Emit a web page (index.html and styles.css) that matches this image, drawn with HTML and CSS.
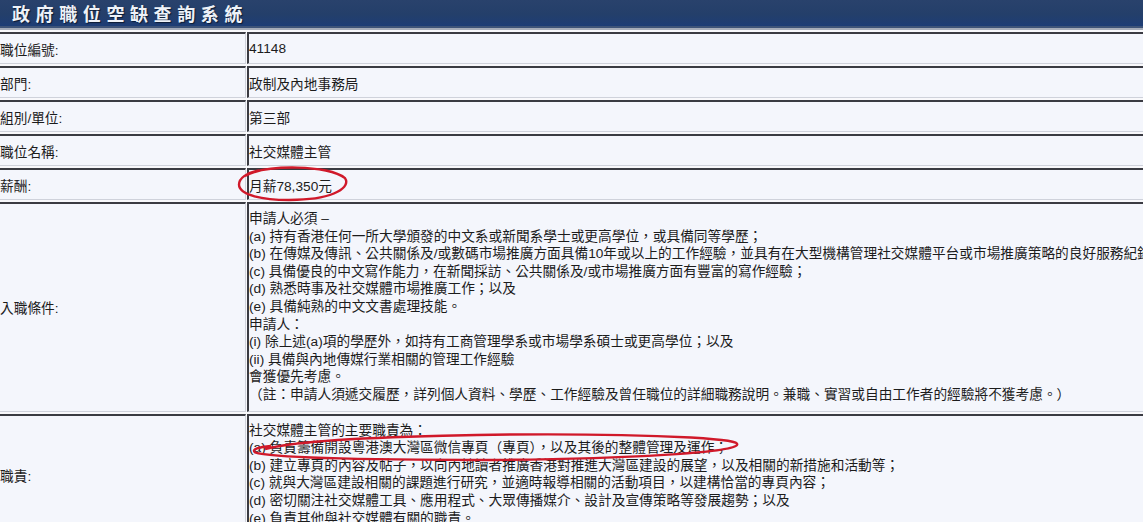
FILE: index.html
```html
<!DOCTYPE html>
<html lang="zh-Hant">
<head>
<meta charset="utf-8">
<title>政府職位空缺查詢系統</title>
<link rel="stylesheet" href="styles.css">
</head>
<body>
<header class="banner">
  <h1 class="banner-title">政府職位空缺查詢系統</h1>
</header>
<main class="detail">
  <div class="cell label">職位編號:</div>
  <div class="cell value">41148</div>

  <div class="cell label">部門:</div>
  <div class="cell value">政制及內地事務局</div>

  <div class="cell label">組別/單位:</div>
  <div class="cell value">第三部</div>

  <div class="cell label">職位名稱:</div>
  <div class="cell value">社交媒體主管</div>

  <div class="cell label">薪酬:</div>
  <div class="cell value"><span class="circled">月薪78,350元<svg class="mark mark-salary" viewBox="0 0 112 34" preserveAspectRatio="none"><path d="M8 10 C 30 -1, 92 0, 108 12 C 114 20, 98 31, 60 32 C 24 33, 2 27, 2 18 C 2 12, 10 7, 22 5"/></svg></span></div>

  <div class="cell label">入職條件:</div>
  <div class="cell value multi">
    <p class="line">申請人必須 –</p>
    <p class="line">(a) 持有香港任何一所大學頒發的中文系或新聞系學士或更高學位，或具備同等學歷；</p>
    <p class="line">(b) 在傳媒及傳訊、公共關係及/或數碼市場推廣方面具備10年或以上的工作經驗，並具有在大型機構管理社交媒體平台或市場推廣策略的良好服務紀錄。</p>
    <p class="line">(c) 具備優良的中文寫作能力，在新聞採訪、公共關係及/或市場推廣方面有豐富的寫作經驗；</p>
    <p class="line">(d) 熟悉時事及社交媒體市場推廣工作；以及</p>
    <p class="line">(e) 具備純熟的中文文書處理技能。</p>
    <p class="line">申請人：</p>
    <p class="line">(i) 除上述(a)項的學歷外，如持有工商管理學系或市場學系碩士或更高學位；以及</p>
    <p class="line">(ii) 具備與內地傳媒行業相關的管理工作經驗</p>
    <p class="line">會獲優先考慮。</p>
    <p class="line">（註：申請人須遞交履歷，詳列個人資料、學歷、工作經驗及曾任職位的詳細職務說明。兼職、實習或自由工作者的經驗將不獲考慮。）</p>
  </div>

  <div class="cell label">職責:</div>
  <div class="cell value multi">
    <p class="line">社交媒體主管的主要職責為：</p>
    <p class="line"><span class="circled">(a) 負責籌備開設粵港澳大灣區微信專頁（專頁），以及其後的整體管理及運作；<svg class="mark mark-duty" viewBox="0 0 490 28" preserveAspectRatio="none"><path d="M14 17 C 60 4, 300 0, 440 6 C 475 8, 488 10, 486 13 C 480 20, 380 26, 240 27 C 110 27, 20 25, 4 20 C 0 17, 8 15, 20 14"/></svg></span></p>
    <p class="line">(b) 建立專頁的內容及帖子，以向內地讀者推廣香港對推進大灣區建設的展望，以及相關的新措施和活動等；</p>
    <p class="line">(c) 就與大灣區建設相關的課題進行研究，並適時報導相關的活動項目，以建構恰當的專頁內容；</p>
    <p class="line">(d) 密切關注社交媒體工具、應用程式、大眾傳播媒介、設計及宣傳策略等發展趨勢；以及</p>
    <p class="line">(e) 負責其他與社交媒體有關的職責。</p>
  </div>
</main>
</body>
</html>
```

FILE: styles.css
```css
* {
  box-sizing: border-box;
}

html,
body {
  margin: 0;
  padding: 0;
  overflow: hidden;
}

body {
  width: 1143px;
  height: 522px;
  background: #f7f8fb;
  font-family: "Liberation Sans", "Noto Sans CJK TC", sans-serif;
  font-size: 13.7px;
  color: #1c1c1c;
}

.banner {
  height: 28px;
  background: linear-gradient(#29426c 0%, #243f6a 55%, #1d3d76 100%);
  border-bottom: 2px solid #3e5479;
}

.banner-title {
  margin: 0;
  padding-left: 12px;
  line-height: 26px;
  font-family: "Noto Sans CJK TC", sans-serif;
  font-size: 18px;
  font-weight: 700;
  letter-spacing: 5.6px;
  color: #eef2f8;
  text-shadow: 1px 1px 1px #0b1a33;
}

.detail {
  display: grid;
  grid-template-columns: 246px 1fr;
  column-gap: 1px;
  row-gap: 2px;
  width: 1200px;
  padding-top: 2px;
  border-top: 2px solid #a6adba;
  background: #f8f8fb;
}

.cell {
  display: flex;
  flex-direction: column;
  justify-content: center;
  min-height: 32px;
  background: #f4f6fc;
  border-top: 2px solid #3a3b42;
  border-bottom: 1px solid #cfd2db;
  white-space: nowrap;
}

.label {
  padding-left: 0;
  border-right: 1px solid #cfd2db;
}

.value {
  padding-left: 0;
  border-left: 2px solid #3a3b42;
}

.multi {
  justify-content: flex-start;
  padding-top: 6px;
  padding-bottom: 7px;
}

.line {
  margin: 0;
  line-height: 17.6px;
}

.circled {
  position: relative;
  display: inline-block;
}

.mark {
  position: absolute;
  overflow: visible;
  pointer-events: none;
}

.mark path {
  fill: none;
  stroke: #d0192a;
  stroke-width: 2.4px;
  vector-effect: non-scaling-stroke;
}

.mark-salary {
  left: -12px;
  top: -10px;
  width: 112px;
  height: 37px;
}

.mark-duty {
  left: 2px;
  top: -8px;
  width: 490px;
  height: 30px;
}
```
